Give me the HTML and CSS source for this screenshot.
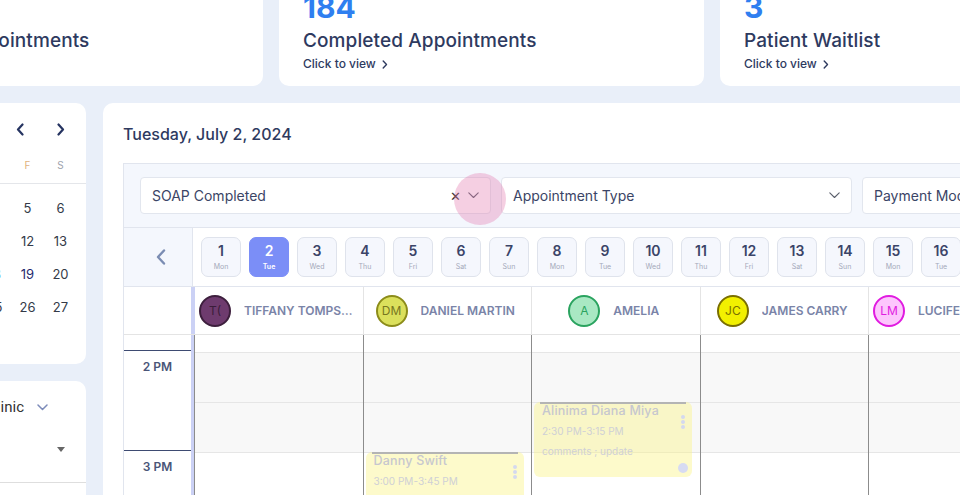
FILE: index.html
```html
<!DOCTYPE html>
<html lang="en">
<head>
<meta charset="utf-8">
<title>Scheduler</title>
<link rel="stylesheet" href="styles.css">
</head>
<body>
<div class="page">
  <div class="stats">
    <div class="stat-card">
      <div class="stat-num">212</div>
      <div class="stat-title">Upcoming Appointments</div>
      <div class="stat-link">Click to view <svg width="6" height="9" viewBox="0 0 6 9"><path d="M1.2 1l3.3 3.5-3.3 3.5" fill="none" stroke="#2e3a5f" stroke-width="1.4" stroke-linecap="round" stroke-linejoin="round"/></svg></div>
    </div>
    <div class="stat-card">
      <div class="stat-num">184</div>
      <div class="stat-title">Completed Appointments</div>
      <div class="stat-link">Click to view <svg width="6" height="9" viewBox="0 0 6 9"><path d="M1.2 1l3.3 3.5-3.3 3.5" fill="none" stroke="#2e3a5f" stroke-width="1.4" stroke-linecap="round" stroke-linejoin="round"/></svg></div>
    </div>
    <div class="stat-card">
      <div class="stat-num">3</div>
      <div class="stat-title">Patient Waitlist</div>
      <div class="stat-link">Click to view <svg width="6" height="9" viewBox="0 0 6 9"><path d="M1.2 1l3.3 3.5-3.3 3.5" fill="none" stroke="#2e3a5f" stroke-width="1.4" stroke-linecap="round" stroke-linejoin="round"/></svg></div>
    </div>
  </div>

  <div class="content">
    <aside class="sidebar">
      <div class="cal-card">
        <div class="cal-head">
          <div class="cal-title">July 2024</div>
          <div class="cal-nav">
            <span class="cal-btn"><svg width="9" height="13" viewBox="0 0 9 13"><path d="M6.5 1.5l-4.5 5 4.5 5" fill="none" stroke="#263461" stroke-width="2.2" stroke-linecap="round" stroke-linejoin="round"/></svg></span>
            <span class="cal-btn"><svg width="9" height="13" viewBox="0 0 9 13"><path d="M2.5 1.5l4.5 5-4.5 5" fill="none" stroke="#263461" stroke-width="2.2" stroke-linecap="round" stroke-linejoin="round"/></svg></span>
          </div>
        </div>
        <div class="cal-week">
          <span>S</span><span>M</span><span>T</span><span>W</span><span>T</span><span class="fri">F</span><span>S</span>
        </div>
        <div class="cal-dates">
          <span class="muted">30</span><span>1</span><span class="sel">2</span><span>3</span><span>4</span><span>5</span><span>6</span>
          <span>7</span><span>8</span><span>9</span><span>10</span><span>11</span><span>12</span><span>13</span>
          <span>14</span><span>15</span><span>16</span><span>17</span><span class="today">18</span><span class="mark">19</span><span>20</span>
          <span>21</span><span>22</span><span>23</span><span>24</span><span>25</span><span>26</span><span>27</span>
          <span>28</span><span>29</span><span>30</span><span>31</span><span></span><span></span><span></span>
        </div>
      </div>
      <div class="filter-card">
        <div class="clinic-row">
          <span class="clinic-label">Select Clinic</span>
          <svg width="11" height="7" viewBox="0 0 11 7"><path d="M1 1l4.5 4.5L10 1" fill="none" stroke="#7d8cba" stroke-width="1.5" stroke-linecap="round" stroke-linejoin="round"/></svg>
        </div>
        <div class="provider-select">
          <span class="provider-label">All Providers</span>
          <span class="tri"></span>
        </div>
      </div>
    </aside>

    <main class="main-card">
      <h2 class="date-title">Tuesday, July 2, 2024</h2>
      <div class="scheduler">
        <div class="filters">
          <div class="select focus">
            <span class="sel-label">SOAP Completed</span>
            <span class="clear">&#x2715;</span>
            <svg class="chev" width="11" height="7" viewBox="0 0 11 7"><path d="M0.8 0.8l4.7 4.7 4.7-4.7" fill="none" stroke="#5a5f6b" stroke-width="1.1" stroke-linecap="round" stroke-linejoin="round"/></svg>
            <span class="ripple"></span>
          </div>
          <div class="select">
            <span class="sel-label">Appointment Type</span>
            <svg class="chev" width="11" height="7" viewBox="0 0 11 7"><path d="M0.8 0.8l4.7 4.7 4.7-4.7" fill="none" stroke="#5a5f6b" stroke-width="1.1" stroke-linecap="round" stroke-linejoin="round"/></svg>
          </div>
          <div class="select">
            <span class="sel-label">Payment Mode</span>
            <svg class="chev" width="11" height="7" viewBox="0 0 11 7"><path d="M0.8 0.8l4.7 4.7 4.7-4.7" fill="none" stroke="#5a5f6b" stroke-width="1.1" stroke-linecap="round" stroke-linejoin="round"/></svg>
          </div>
        </div>

        <div class="days-row">
          <div class="days-nav"><svg width="12" height="16" viewBox="0 0 12 16"><path d="M9 1.5L3 8l6 6.5" fill="none" stroke="#7b8db3" stroke-width="2.4" stroke-linecap="round" stroke-linejoin="round"/></svg></div>
          <div class="days">
            <div class="chip"><b>1</b><i>Mon</i></div>
            <div class="chip active"><b>2</b><i>Tue</i></div>
            <div class="chip"><b>3</b><i>Wed</i></div>
            <div class="chip"><b>4</b><i>Thu</i></div>
            <div class="chip"><b>5</b><i>Fri</i></div>
            <div class="chip"><b>6</b><i>Sat</i></div>
            <div class="chip"><b>7</b><i>Sun</i></div>
            <div class="chip"><b>8</b><i>Mon</i></div>
            <div class="chip"><b>9</b><i>Tue</i></div>
            <div class="chip"><b>10</b><i>Wed</i></div>
            <div class="chip"><b>11</b><i>Thu</i></div>
            <div class="chip"><b>12</b><i>Fri</i></div>
            <div class="chip"><b>13</b><i>Sat</i></div>
            <div class="chip"><b>14</b><i>Sun</i></div>
            <div class="chip"><b>15</b><i>Mon</i></div>
            <div class="chip"><b>16</b><i>Tue</i></div>
            <div class="chip"><b>17</b><i>Wed</i></div>
          </div>
        </div>

        <div class="res-row">
          <div class="res-gutter"></div>
          <div class="res-cols">
            <div class="res-cell"><span class="avatar av-tt">T(</span><span class="res-name">Tiffany Tompson</span></div>
            <div class="res-cell"><span class="avatar av-dm">DM</span><span class="res-name">Daniel Martin</span></div>
            <div class="res-cell"><span class="avatar av-a">A</span><span class="res-name">Amelia</span></div>
            <div class="res-cell"><span class="avatar av-jc">JC</span><span class="res-name">James Carry</span></div>
            <div class="res-cell"><span class="avatar av-lm">LM</span><span class="res-name">Lucifer Morningstar</span></div>
            <div class="res-cell"><span class="avatar av-a">RK</span><span class="res-name">Robert King</span></div>
          </div>
        </div>

        <div class="body-row">
          <div class="time-gutter">
            <div class="gutter-top"></div>
            <div class="hour">2 PM</div>
            <div class="hour">3 PM</div>
          </div>
          <div class="cols">
            <div class="col">
              <div class="col-top"></div>
              <div class="slot off"></div><div class="slot off"></div><div class="slot"></div><div class="slot"></div>
            </div>
            <div class="col">
              <div class="col-top"></div>
              <div class="slot off"></div><div class="slot off"></div><div class="slot"></div><div class="slot"></div>
              <div class="appt" style="top:117px;height:75px">
                <div class="appt-bar"></div>
                <div class="appt-name">Danny Swift</div>
                <div class="appt-time">3:00 PM-3:45 PM</div>
                <div class="appt-note">comments ; update</div>
                <span class="kebab"><i></i><i></i><i></i></span>
                <span class="appt-dot"></span>
              </div>
            </div>
            <div class="col">
              <div class="col-top"></div>
              <div class="slot off"></div><div class="slot off"></div><div class="slot"></div><div class="slot"></div>
              <div class="appt" style="top:67px;height:75px">
                <div class="appt-bar"></div>
                <div class="appt-name">Alinima Diana Miya</div>
                <div class="appt-time">2:30 PM-3:15 PM</div>
                <div class="appt-note">comments ; update</div>
                <span class="kebab"><i></i><i></i><i></i></span>
                <span class="appt-dot"></span>
              </div>
            </div>
            <div class="col">
              <div class="col-top"></div>
              <div class="slot off"></div><div class="slot off"></div><div class="slot"></div><div class="slot"></div>
            </div>
            <div class="col">
              <div class="col-top"></div>
              <div class="slot off"></div><div class="slot off"></div><div class="slot"></div><div class="slot"></div>
            </div>
            <div class="col">
              <div class="col-top"></div>
              <div class="slot off"></div><div class="slot off"></div><div class="slot"></div><div class="slot"></div>
            </div>
          </div>
        </div>
      </div>
    </main>
  </div>
</div>
</body>
</html>
```

FILE: styles.css
```css
* { box-sizing: border-box; margin: 0; padding: 0; }
html, body { width: 960px; height: 495px; overflow: hidden; }
body {
  background: #e9eff9;
  font-family: Inter, "Noto Sans", sans-serif;
  color: #2e3a5f;
}

.page {
  margin: -26px 0 0 -162px;
  width: 1500px;
  display: flex;
  flex-direction: column;
  gap: 17px;
}

/* stat cards */
.stats { display: flex; gap: 16px; }
.stat-card {
  flex: none;
  width: 425px;
  height: 112px;
  background: #fff;
  border-radius: 10px;
  padding: 16px 24px 0;
}
.stat-num { font-size: 30px; line-height: 34px; font-weight: 700; color: #2f7ff0; }
.stat-title { margin-top: 4px; font-size: 19px; line-height: 26px; font-weight: 500; color: #2e3a5f; letter-spacing: 0.1px; }
.stat-link { margin-top: 1px; display: flex; align-items: center; gap: 6px; font-size: 12px; line-height: 18px; font-weight: 500; color: #2e3a5f; }

/* content */
.content { display: flex; gap: 17px; align-items: flex-start; }
.sidebar { flex: none; width: 248px; display: flex; flex-direction: column; gap: 17px; }

.cal-card { height: 261px; background: #fff; border-radius: 10px; padding-top: 12px; }
.cal-head { height: 28px; display: flex; align-items: center; justify-content: space-between; padding: 0 14px 0 8px; }
.cal-title { font-size: 16px; font-weight: 600; color: #263461; }
.cal-nav { display: flex; gap: 16px; }
.cal-btn { width: 24px; height: 28px; display: flex; align-items: center; justify-content: center; }
.cal-week {
  margin-top: 12px;
  padding: 0 8px 8px;
  border-bottom: 1px solid #e4e6ea;
  display: grid;
  grid-template-columns: repeat(7, 33px);
  font-size: 10px;
  line-height: 20px;
  text-align: center;
  color: #9ea3ad;
}
.cal-week .fri { color: #dfb27c; }
.cal-dates {
  padding: 7px 8px 0;
  display: grid;
  grid-template-columns: repeat(7, 33px);
  grid-auto-rows: 33px;
  font-size: 13px;
  color: #343a48;
}
.cal-dates span { display: flex; align-items: center; justify-content: center; }
.cal-dates .muted { color: #b6bac3; }
.cal-dates .sel { color: #fff; background: #2f7ff0; border-radius: 50%; width: 28px; height: 28px; margin: auto; }
.cal-dates .today { color: #4d90f7; }
.cal-dates .mark { color: #1f2a6e; }

.filter-card { height: 200px; background: #fff; border-radius: 10px; padding-top: 16px; }
.clinic-row { height: 20px; display: flex; align-items: center; justify-content: flex-end; gap: 13px; padding-right: 38px; }
.clinic-label { font-family: Roboto, "Liberation Sans", sans-serif; font-size: 15px; color: #333; }
.provider-select {
  margin-top: 3px;
  height: 63px;
  border-bottom: 1px solid #dedede;
  display: flex;
  align-items: center;
  justify-content: space-between;
  padding: 0 21px 0 12px;
}
.provider-label { font-family: Roboto, "Liberation Sans", sans-serif; font-size: 15px; color: #555; }
.tri { width: 0; height: 0; border-left: 4.5px solid transparent; border-right: 4.5px solid transparent; border-top: 5px solid #666; margin-top: -3px; }

/* main card */
.main-card { flex: none; width: 1300px; height: 600px; background: #fff; border-radius: 10px; padding: 19px 20px; }
.date-title { font-size: 16px; line-height: 24px; font-weight: 500; color: #2e3a5f; }
.scheduler { margin-top: 17px; border: 1px solid #e1e5ee; }

.filters {
  background: #f4f7fd;
  border-bottom: 1px solid #e1e5ee;
  padding: 13px 16px;
  display: flex;
  gap: 10px;
}
.select {
  position: relative;
  flex: none;
  width: 351px;
  height: 37px;
  background: #fff;
  border: 1px solid #e2e6ee;
  border-radius: 4px;
  display: flex;
  align-items: center;
  padding: 0 11px;
  font-size: 14px;
  color: #3b4566;
}
.sel-label { flex: 1; }
.clear { font-size: 13px; color: #333; margin-right: 7px; }
.ripple {
  position: absolute;
  left: 313px;
  top: -5px;
  width: 52px;
  height: 52px;
  border-radius: 50%;
  background: rgba(225, 118, 172, 0.35);
  z-index: 2;
}

.days-row { display: flex; border-bottom: 1px solid #e1e5ee; }
.days-nav {
  flex: none;
  width: 69px;
  background: #f4f7fd;
  border-right: 1px solid #e1e5ee;
  display: flex;
  align-items: center;
  justify-content: center;
  padding-left: 5px;
}
.days { display: flex; gap: 8px; padding: 9px 8px; background: #fff; }
.chip {
  flex: none;
  width: 40px;
  height: 40px;
  border: 1px solid #dfe3ec;
  border-radius: 7px;
  background: #f5f7fd;
  display: flex;
  flex-direction: column;
  align-items: center;
  padding-top: 4px;
}
.chip b { font-size: 14px; line-height: 18px; font-weight: 600; color: #3b4468; }
.chip i { margin-top: 1.5px; font-style: normal; font-size: 7px; line-height: 9px; color: #a4a9ba; }
.chip.active { background: #7b8ef7; border-color: #7b8ef7; }
.chip.active b, .chip.active i { color: #fff; }
.chip.active i { font-weight: 600; }

.res-row { display: flex; height: 48px; border-bottom: 1px solid #e4e4e4; }
.res-gutter { flex: none; width: 67px; }
.res-cols { display: flex; border-left: 3px solid #cbd1f5; }
.res-cell {
  flex: none;
  width: 168.5px;
  border-left: 1px solid #e4e4e4;
  display: flex;
  align-items: center;
  justify-content: center;
  gap: 13px;
  padding: 0 8px 0 4px;
}
.res-cell:first-child { border-left-color: #cbd1f5; }
.avatar {
  flex: none;
  width: 32px;
  height: 32px;
  border-radius: 50%;
  border: 2px solid;
  display: flex;
  align-items: center;
  justify-content: center;
  font-size: 12px;
}
.av-tt { background: #6e3b6e; border-color: #3d1f3d; color: #3a1d3a; }
.av-dm { background: #dbe05c; border-color: #8c8c1a; color: #77771f; }
.av-a { background: #a9e8c3; border-color: #2aa35f; color: #2aa35f; }
.av-jc { background: #f2f000; border-color: #7a6f00; color: #7a6f00; }
.av-lm { background: #fdc6fd; border-color: #e01be0; color: #e01be0; }
.res-name {
  min-width: 0;
  white-space: nowrap;
  overflow: hidden;
  text-overflow: ellipsis;
  text-transform: uppercase;
  font-size: 12px;
  font-weight: 600;
  color: #7a84a8;
}

.body-row { display: flex; }
.time-gutter { flex: none; width: 67px; }
.gutter-top { height: 15px; }
.hour {
  height: 100px;
  border-top: 1px solid #3e4b72;
  padding-top: 8px;
  text-align: center;
  font-size: 12px;
  line-height: 16px;
  font-weight: 600;
  color: #4a5578;
}
.cols { display: flex; border-left: 3px solid #cbd1f5; }
.col { position: relative; flex: none; width: 168.5px; border-left: 1px solid #8c8c8c; }
.col-top { height: 17px; }
.slot { height: 50px; border-top: 1px solid #e6e6e6; }
.slot.off { background: #f8f8f8; }

.appt {
  position: absolute;
  left: 2px;
  width: 158px;
  border-radius: 6px;
  background: rgba(250, 245, 140, 0.45);
  overflow: hidden;
}
.appt-bar { height: 2px; margin: 0 6px; background: #b4b4b4; }
.appt-name { margin-top: -1px; padding: 0 8px; font-size: 12.5px; line-height: 16px; font-weight: 500; color: #c6c7cf; letter-spacing: 0.2px; }
.appt-time { margin-top: 5px; padding: 0 8px; font-size: 10px; line-height: 14px; color: #cfd0d6; }
.appt-note { margin-top: 6px; padding: 0 8px; font-size: 10px; line-height: 14px; color: #cfd0d6; }
.kebab { position: absolute; right: 7px; top: 13px; display: flex; flex-direction: column; gap: 1px; }
.kebab i { width: 4px; height: 4px; border-radius: 50%; background: #d4d8ef; }
.appt-dot { position: absolute; right: 4px; bottom: 4px; width: 10px; height: 10px; border-radius: 50%; background: #d7dbf2; }
```
